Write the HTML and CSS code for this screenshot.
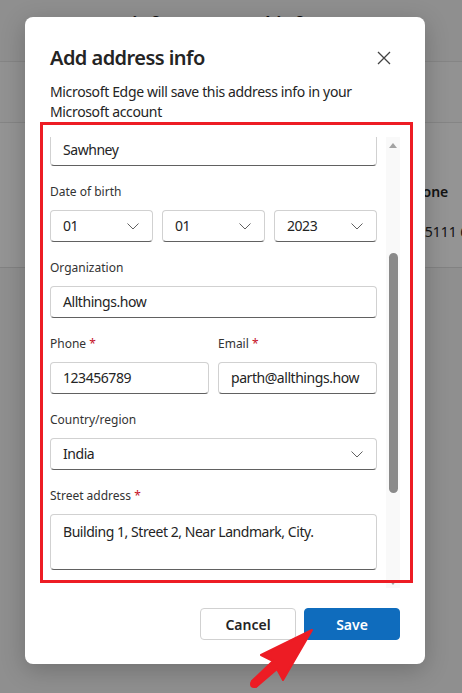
FILE: index.html
```html
<!DOCTYPE html>
<html lang="en">
<head>
    <meta charset="UTF-8">
    <meta name="viewport" content="width=device-width, initial-scale=1.0">
    <title>Add address info</title>
    <link rel="stylesheet" href="styles.css">
</head>
<body>
    <!-- Settings page behind the dialog -->
    <div class="page">
        <div class="page-head">
            <h1 class="page-title">Payment info &nbsp; Personal info</h1>
        </div>
        <div class="band"></div>
        <div class="card">
            <div class="card-row card-head">Phone</div>
            <div class="card-row">+1 5111 6789</div>
        </div>
        <div class="overlay"></div>
    </div>

    <!-- Dialog -->
    <div class="dialog">
        <div class="dialog-head">
            <h2 class="dialog-title">Add address info</h2>
            <button class="close-btn" aria-label="Close">
                <svg width="14" height="14" viewBox="0 0 14 14">
                    <path d="M1 1 L13 13 M13 1 L1 13" stroke="#424242" stroke-width="1.3" fill="none"/>
                </svg>
            </button>
        </div>
        <p class="dialog-desc">Microsoft Edge will save this address info in your Microsoft account</p>

        <div class="form-area">
            <div class="form-viewport">
                <div class="form">
                    <div class="field">
                        <label>Last name</label>
                        <div class="input">Sawhney</div>
                    </div>
                    <div class="field">
                        <label>Date of birth</label>
                        <div class="row-3">
                            <div class="input select"><span>01</span><svg class="chevron" width="12" height="7" viewBox="0 0 12 7"><path d="M0.5 0.5 L6 6 L11.5 0.5" /></svg></div>
                            <div class="input select"><span>01</span><svg class="chevron" width="12" height="7" viewBox="0 0 12 7"><path d="M0.5 0.5 L6 6 L11.5 0.5" /></svg></div>
                            <div class="input select"><span>2023</span><svg class="chevron" width="12" height="7" viewBox="0 0 12 7"><path d="M0.5 0.5 L6 6 L11.5 0.5" /></svg></div>
                        </div>
                    </div>
                    <div class="field">
                        <label>Organization</label>
                        <div class="input">Allthings.how</div>
                    </div>
                    <div class="row-2">
                        <div class="field">
                            <label>Phone <span class="req">*</span></label>
                            <div class="input">123456789</div>
                        </div>
                        <div class="field">
                            <label>Email <span class="req">*</span></label>
                            <div class="input">parth@allthings.how</div>
                        </div>
                    </div>
                    <div class="field">
                        <label>Country/region</label>
                        <div class="input select"><span>India</span><svg class="chevron" width="12" height="7" viewBox="0 0 12 7"><path d="M0.5 0.5 L6 6 L11.5 0.5" /></svg></div>
                    </div>
                    <div class="field">
                        <label>Street address <span class="req">*</span></label>
                        <div class="input textarea">Building 1, Street 2, Near Landmark, City.</div>
                    </div>
                </div>
            </div>
            <div class="scrollbar">
                <div class="arrow up"></div>
                <div class="track"><div class="thumb"></div></div>
                <div class="arrow down"></div>
            </div>
        </div>

        <div class="dialog-foot">
            <button class="btn">Cancel</button>
            <button class="btn primary">Save</button>
        </div>

        <!-- annotation box -->
        <div class="highlight"></div>
    </div>

    <!-- annotation arrow -->
    <svg class="pointer" width="80" height="73" viewBox="0 0 80 73">
        <path d="M72 10 L21 35 L33 41 L12 61 L16 67 L37 49 L43 60 Z" fill="#ed1c24" stroke="#ed1c24" stroke-width="2" stroke-linejoin="round"/>
        <circle cx="14" cy="64" r="4" fill="#ed1c24"/>
    </svg>
</body>
</html>
```

FILE: styles.css
```css
* {
    margin: 0;
    padding: 0;
    box-sizing: border-box;
    font-family: 'Noto Sans', 'Open Sans', sans-serif;
}

body {
    width: 462px;
    height: 693px;
    overflow: hidden;
    background-color: #f7f7f7;
}

/* Page behind */
.page {
    position: relative;
    height: 693px;
    background-color: #f7f7f7;
}

.page-head {
    height: 62px;
    padding: 10px 0 0 40px;
    border-bottom: 1px solid #e6e6e6;
}

.page-title {
    font-size: 20px;
    font-weight: 600;
    color: #1a1a1a;
    white-space: nowrap;
}

.band {
    height: 61px;
    background-color: #fbfbfb;
    border-bottom: 1px solid #e6e6e6;
}

.card {
    height: 145px;
    background-color: #ffffff;
    border-bottom: 1px solid #e0e0e0;
    padding: 59px 0 0 405px;
    display: flex;
    flex-direction: column;
    gap: 20px;
}

.card-row {
    font-size: 14px;
    line-height: 20px;
    color: #242424;
    white-space: nowrap;
}

.card-head {
    font-weight: 600;
}

.overlay {
    position: absolute;
    inset: 0;
    background-color: rgba(0, 0, 0, 0.42);
}

/* Dialog */
.dialog {
    position: absolute;
    left: 25px;
    top: 17px;
    width: 400px;
    background-color: #ffffff;
    border-radius: 8px;
    box-shadow: 0 6px 24px rgba(0, 0, 0, 0.22);
    padding: 25px 25px 24px;
    display: flex;
    flex-direction: column;
}

.dialog-head {
    display: flex;
    justify-content: space-between;
    align-items: center;
    height: 32px;
}

.dialog-title {
    font-size: 20px;
    line-height: 28px;
    font-weight: 600;
    letter-spacing: -0.55px;
    color: #242424;
}

.close-btn {
    width: 32px;
    height: 32px;
    border: none;
    background: none;
    display: flex;
    align-items: center;
    justify-content: center;
}

.dialog-desc {
    margin-top: 8px;
    font-size: 14px;
    line-height: 20px;
    letter-spacing: -0.35px;
    color: #242424;
}

.form-area {
    margin-top: 15px;
    height: 451px;
    display: flex;
}

.form-viewport {
    flex: 1;
    overflow: hidden;
}

.form {
    margin-top: -29px;
    display: flex;
    flex-direction: column;
    gap: 18px;
}

.field {
    display: flex;
    flex-direction: column;
    gap: 10px;
    min-width: 0;
}

label {
    font-size: 12px;
    line-height: 16px;
    color: #333333;
}

.req {
    color: #c50f1f;
}

.input {
    height: 32px;
    border: 1px solid #d1d1d1;
    border-bottom-color: #616161;
    border-radius: 4px;
    padding: 0 12px;
    font-size: 14px;
    line-height: 30px;
    letter-spacing: -0.45px;
    color: #242424;
    white-space: nowrap;
    overflow: hidden;
}

.select {
    display: flex;
    justify-content: space-between;
    align-items: center;
    padding-right: 13px;
}

.chevron path {
    fill: none;
    stroke: #616161;
    stroke-width: 1;
}

.textarea {
    height: 56px;
    padding: 7px 12px;
    line-height: 20px;
}

.row-3 {
    display: grid;
    grid-template-columns: 1fr 1fr 1fr;
    gap: 9px;
}

.row-2 {
    display: grid;
    grid-template-columns: 1fr 1fr;
    gap: 9px;
}

/* Scrollbar */
.scrollbar {
    width: 14px;
    margin-left: 9px;
    background-color: #f9f9f9;
    display: flex;
    flex-direction: column;
    align-items: center;
}

.arrow {
    width: 0;
    height: 0;
    border-left: 4px solid transparent;
    border-right: 4px solid transparent;
}

.arrow.up {
    margin-top: 6px;
    border-bottom: 5px solid #a3a3a3;
}

.arrow.down {
    margin-bottom: 3px;
    border-top: 5px solid #a3a3a3;
}

.track {
    flex: 1;
    width: 100%;
    display: flex;
    justify-content: center;
}

.thumb {
    margin-top: 105px;
    width: 9px;
    height: 240px;
    border-radius: 5px;
    background-color: #8a8a8a;
}

/* Footer */
.dialog-foot {
    margin-top: 20px;
    display: flex;
    justify-content: flex-end;
    gap: 8px;
}

.btn {
    width: 96px;
    height: 32px;
    border: 1px solid #d1d1d1;
    border-radius: 4px;
    background-color: #ffffff;
    font-size: 14px;
    font-weight: 600;
    color: #242424;
}

.btn.primary {
    background-color: #0f6cbd;
    border-color: #0f6cbd;
    color: #ffffff;
}

/* Annotations */
.highlight {
    position: absolute;
    left: 15px;
    top: 105px;
    width: 373px;
    height: 461px;
    border: 3px solid #ed1c24;
}

.pointer {
    position: absolute;
    left: 240px;
    top: 620px;
}
```
